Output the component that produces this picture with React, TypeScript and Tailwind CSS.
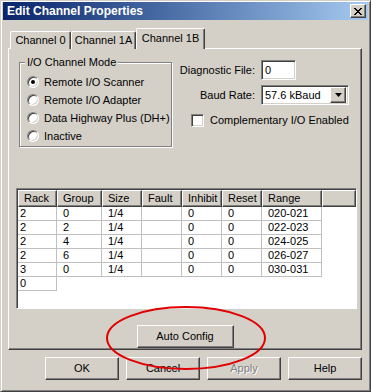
import React from "react";

const raised =
  "bg-[#d4d0c8] border border-t-white border-l-white border-r-[#404040] border-b-[#404040] shadow-[inset_-1px_-1px_#808080]";
const sunken =
  "border border-t-[#808080] border-l-[#808080] border-r-white border-b-white shadow-[inset_1px_1px_#404040,inset_-1px_-1px_#d4d0c8]";

function Radio({ checked }: { checked?: boolean }) {
  return (
    <span className="w-[12px] h-[12px] shrink-0 rounded-full bg-white border border-t-[#808080] border-l-[#808080] border-b-white border-r-white shadow-[inset_1px_1px_#404040,inset_-1px_-1px_#d4d0c8] flex items-center justify-center">
      {checked && <span className="w-[4px] h-[4px] rounded-full bg-black" />}
    </span>
  );
}

function Button({ label, disabled, w = "w-[74px]" }: { label: string; disabled?: boolean; w?: string }) {
  return (
    <div className={`${raised} ${w} h-[23px] flex items-center justify-center`}>
      <span className={disabled ? "text-[#808080] [text-shadow:1px_1px_#ffffff]" : "text-black"}>{label}</span>
    </div>
  );
}

const cols = [
  { name: "Rack", w: "w-[39px]" },
  { name: "Group", w: "w-[45px]" },
  { name: "Size", w: "w-[40px]" },
  { name: "Fault", w: "w-[40px]" },
  { name: "Inhibit", w: "w-[40px]" },
  { name: "Reset", w: "w-[40px]" },
  { name: "Range", w: "w-[60px]" },
];

const rows = [
  ["2", "0", "1/4", "", "0", "0", "020-021"],
  ["2", "2", "1/4", "", "0", "0", "022-023"],
  ["2", "4", "1/4", "", "0", "0", "024-025"],
  ["2", "6", "1/4", "", "0", "0", "026-027"],
  ["3", "0", "1/4", "", "0", "0", "030-031"],
];

export default function App() {
  return (
    <div className="relative w-[371px] h-[392px] bg-[#d4d0c8] border border-t-[#d4d0c8] border-l-[#d4d0c8] border-r-[#404040] border-b-[#404040] shadow-[inset_1px_1px_#ffffff,inset_-1px_-1px_#808080] font-['Liberation_Sans',Arial,sans-serif] text-[11px] text-black leading-none overflow-hidden">
      {/* title bar */}
      <div className="mx-[2px] mt-[1px] h-[18px] bg-gradient-to-r from-[#0a246a] to-[#a6caf0] flex items-center justify-between pl-[4px] pr-[2px]">
        <span className="text-white font-bold text-[12px]">Edit Channel Properties</span>
        <div className={`${raised} w-[16px] h-[14px] flex items-center justify-center`}>
          <svg width="8" height="7" viewBox="0 0 8 7">
            <path d="M0 0L7 7M1 0L8 7M7 0L0 7M8 0L1 7" stroke="#000" strokeWidth="1" />
          </svg>
        </div>
      </div>

      {/* tabs */}
      <div className="ml-[9px] mt-[9px] h-[20px] flex items-end -mb-px relative z-10">
        <div className="w-[61px] h-[18px] bg-[#d4d0c8] border-t border-l border-t-white border-l-white border-r border-r-[#404040] shadow-[inset_-1px_0_#808080] rounded-t-[2px] flex items-center justify-center">
          Channel 0
        </div>
        <div className="w-[65px] h-[18px] bg-[#d4d0c8] border-t border-l border-t-white border-l-white border-r border-r-[#404040] shadow-[inset_-1px_0_#808080] rounded-t-[2px] flex items-center justify-center">
          Channel 1A
        </div>
        <div className="w-[69px] h-[21px] bg-[#d4d0c8] border-t border-l border-t-white border-l-white border-r border-r-[#404040] shadow-[inset_-1px_0_#808080] rounded-t-[2px] flex items-start pt-[4px] justify-center">
          Channel 1B
        </div>
      </div>

      {/* tab panel */}
      <div className="ml-[7px] w-[354px] h-[302px] border border-t-white border-l-white border-r-[#404040] border-b-[#404040] shadow-[inset_-1px_-1px_#808080] flex flex-col">
        <div className="h-[139px] flex items-start">
          {/* group box */}
          <div className="relative ml-[10px] mt-[13px] w-[153px] h-[85px] border border-[#808080] shadow-[1px_1px_#ffffff,inset_1px_1px_#ffffff] pl-[7px] pt-[10px] flex flex-col">
            <span className="absolute -top-[6px] left-[5px] px-[2px] bg-[#d4d0c8]">I/O Channel Mode</span>
            {["Remote I/O Scanner", "Remote I/O Adapter", "Data Highway Plus (DH+)", "Inactive"].map((t, i) => (
              <div key={t} className="h-[18px] flex items-center gap-[5px]">
                <Radio checked={i === 0} />
                <span>{t}</span>
              </div>
            ))}
          </div>

          {/* right side */}
          <div className="ml-[4px] mt-[11px] flex flex-col">
            <div className="flex items-center">
              <span className="w-[79px] text-right whitespace-nowrap">Diagnostic File:</span>
              <div className={`${sunken} ml-[6px] w-[35px] h-[20px] bg-white flex items-center pl-[3px]`}>0</div>
            </div>
            <div className="flex items-center mt-[5px]">
              <span className="w-[79px] text-right whitespace-nowrap">Baud Rate:</span>
              <div className={`${sunken} ml-[6px] w-[88px] h-[20px] bg-white flex items-center justify-between pl-[3px] pr-[2px]`}>
                <span>57.6 kBaud</span>
                <div className={`${raised} w-[16px] h-[16px] flex items-center justify-center`}>
                  <svg width="7" height="4" viewBox="0 0 7 4">
                    <path d="M0 0H7L3.5 4Z" fill="#000" />
                  </svg>
                </div>
              </div>
            </div>
            <div className="flex items-center mt-[9px] ml-[15px] gap-[6px]">
              <div className={`${sunken} w-[13px] h-[13px] bg-white`} />
              <span className="whitespace-nowrap">Complementary I/O Enabled</span>
            </div>
          </div>
        </div>

        {/* table */}
        <div className="ml-[7px] w-[341px] h-[121px] border border-t-[#808080] border-l-[#808080] border-r-white border-b-white shadow-[inset_1px_1px_#404040] bg-white pt-px pl-px flex flex-col">
          <div className="flex h-[17px] shrink-0">
            {cols.map((c) => (
              <div key={c.name} className={`${raised} ${c.w} h-[17px] flex items-center pl-[5px]`}>
                {c.name}
              </div>
            ))}
            <div className={`${raised} flex-1 h-[17px]`} />
          </div>
          {rows.map((r, ri) => (
            <div key={ri} className="flex h-[14px]">
              {r.map((v, ci) => (
                <div
                  key={ci}
                  className={`${cols[ci].w} h-[14px] border-r border-b border-[#c0c0c0] flex items-center ${ci === 0 ? "pl-[2px]" : "pl-[6px]"}`}
                >
                  {v}
                </div>
              ))}
            </div>
          ))}
          <div className="flex h-[14px]">
            <div className="w-[39px] h-[14px] border-r border-b border-[#c0c0c0] flex items-center pl-[2px]">0</div>
          </div>
        </div>

        <div className="mt-[16px] flex justify-center">
          <Button label="Auto Config" w="w-[97px]" />
        </div>
      </div>

      {/* dialog buttons */}
      <div className="mt-[7px] mr-[8px] flex justify-end gap-[7px]">
        <Button label="OK" />
        <Button label="Cancel" />
        <Button label="Apply" disabled />
        <Button label="Help" />
      </div>

      {/* red annotation */}
      <svg className="absolute left-[104px] top-[304px]" width="164" height="66" viewBox="0 0 164 66">
        <ellipse cx="81" cy="33" rx="79" ry="31" fill="none" stroke="#e00000" strokeWidth="2" />
      </svg>
    </div>
  );
}
